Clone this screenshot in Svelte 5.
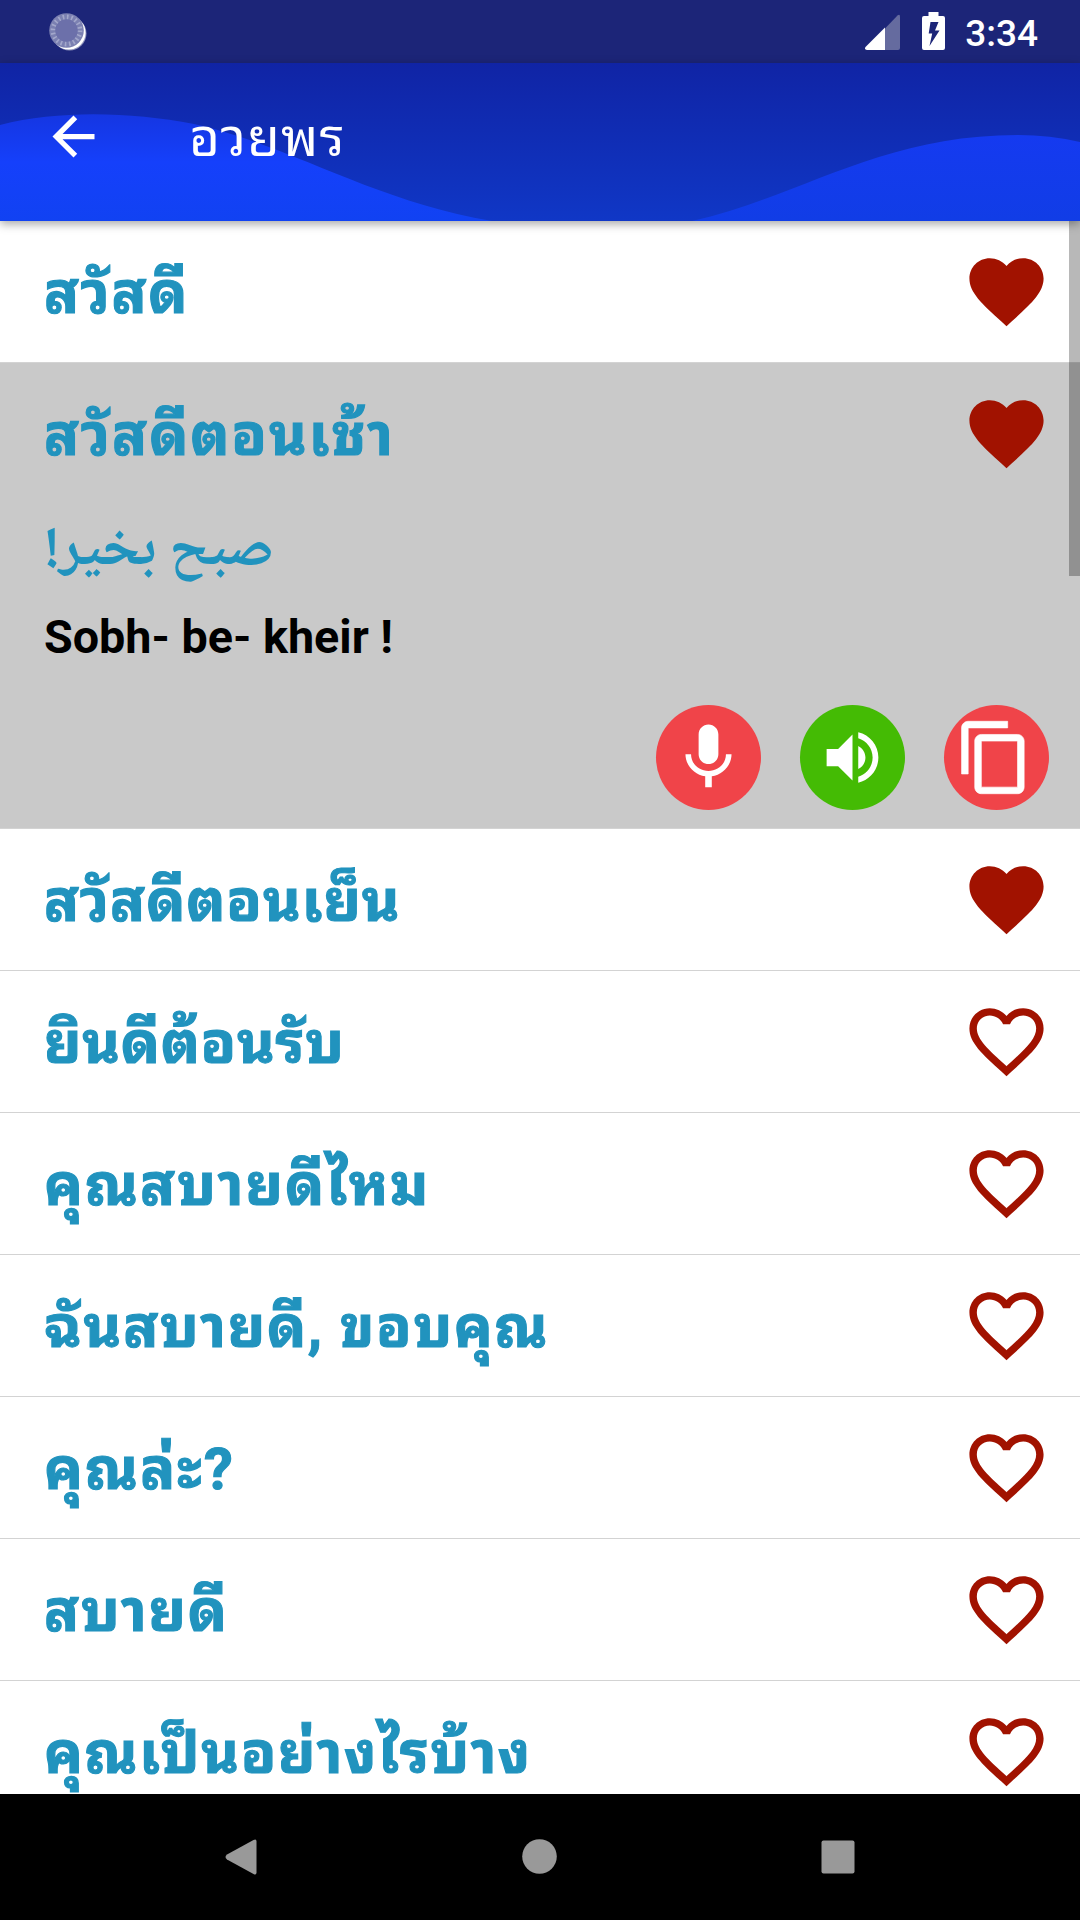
<script lang="ts">
	interface Phrase {
		text: string;
		tracking: number;
		favorite: boolean;
		translation?: string;
		spoken?: string;
	}

	let phrases: Phrase[] = $state([
		{ text: 'สวัสดี', tracking: 1.7, favorite: true },
		{
			text: 'สวัสดีตอนเช้า',
			tracking: 2,
			favorite: true,
			translation: 'صبح بخیر!',
			spoken: 'Sobh- be- kheir !'
		},
		{ text: 'สวัสดีตอนเย็น', tracking: 1, favorite: true },
		{ text: 'ยินดีต้อนรับ', tracking: 0.8, favorite: false },
		{ text: 'คุณสบายดีไหม', tracking: 2.1, favorite: false },
		{ text: 'ฉันสบายดี, ขอบคุณ', tracking: 1.8, favorite: false },
		{ text: 'คุณล่ะ?', tracking: 2.2, favorite: false },
		{ text: 'สบายดี', tracking: 1.8, favorite: false },
		{ text: 'คุณเป็นอย่างไรบ้าง', tracking: 1.7, favorite: false }
	]);

	let opened = $state(1);
</script>

<div class="screen">
	<div class="status-bar">
		<svg class="spinner" width="40" height="40" viewBox="0 0 40 40">
			<circle cx="21.5" cy="21.5" r="17" fill="#8d92bb" />
			<circle cx="20.8" cy="20.8" r="16.8" fill="#fff" />
			<circle cx="18.5" cy="18.5" r="17.3" fill="#7b80b1" />
			<circle cx="18.5" cy="18.5" r="13.4" fill="none" stroke="#a3a7cb" stroke-width="5" stroke-dasharray="1.6 2.61" />
			<circle cx="18.5" cy="18.5" r="11.2" fill="#6c70aa" />
		</svg>
		<div class="status-icons">
			<svg width="35" height="36" viewBox="0 0 35 36">
				<path d="M20 14.5 32.500 1.500Q35-.5 35 2.500V34q0 2-2 2H20z" fill="#656b9f" />
				<path d="M20 13.500V36H2q-3-.5-1.500-3z" fill="#fff" />
			</svg>
			<svg class="battery" width="23" height="38" viewBox="0 0 23 38">
				<path
					fill="#fff"
					fill-rule="evenodd"
					d="M6.500 0h10v4H21q2 0 2 2v30q0 2-2 2H2q-2 0-2-2V6q0-2 2-2h4.500zM8.500 10 6.700 21.500h3.500L7.500 34 17.500 18.500h-4.500L16.500 10z"
				/>
			</svg>
			<span class="time">3:34</span>
		</div>
	</div>

	<header>
		<svg class="waves" width="1080" height="158" viewBox="0 0 1080 158" preserveAspectRatio="none">
			<defs>
				<linearGradient id="left" x1="0" y1="0" x2="0" y2="1">
					<stop offset="0" stop-color="#1536e2" />
					<stop offset=".45" stop-color="#1540fb" />
					<stop offset="1" stop-color="#1142f2" />
				</linearGradient>
				<linearGradient id="right" x1="0" y1="0" x2="0" y2="1">
					<stop offset="0" stop-color="#153af0" />
					<stop offset="1" stop-color="#113de6" />
				</linearGradient>
			</defs>
			<path d="M0 62C60 47 130 49 194 61C290 82 370 137 492 158H0z" fill="url(#left)" />
			<path d="M692 158C800 134 880 72 1018 72Q1050 72 1080 79V158z" fill="url(#right)" />
		</svg>
		<div class="toolbar">
			<svg width="63" height="63" viewBox="0 0 24 24" fill="#fff">
				<path d="M20 11H7.830l5.590-5.590L12 4l-8 8 8 8 1.410-1.410L7.830 13H20v-2z" />
			</svg>
			<h1>อวยพร</h1>
		</div>
	</header>

	<main>
		{#each phrases as phrase, i}
			<section class:open={i === opened}>
				<div class="phrase">
					<button class="title" style:letter-spacing="{phrase.tracking}px" onclick={() => (opened = i)}>
						{phrase.text}
					</button>
					<button aria-label="favorite" onclick={() => (phrase.favorite = !phrase.favorite)}>
						<svg width="89" height="89" viewBox="0 0 24 24" fill="#a11200">
							{#if phrase.favorite}
								<path
									d="M12 21.350l-1.450-1.320C5.400 15.360 2 12.280 2 8.500 2 5.420 4.420 3 7.500 3c1.740 0 3.410.81 4.500 2.090C13.090 3.810 14.760 3 16.500 3 19.580 3 22 5.420 22 8.500c0 3.780-3.400 6.860-8.550 11.540L12 21.350z"
								/>
							{:else}
								<path
									d="M16.500 3c-1.740 0-3.410.81-4.500 2.090C10.910 3.810 9.240 3 7.500 3 4.420 3 2 5.420 2 8.500c0 3.780 3.400 6.860 8.550 11.540L12 21.350l1.450-1.320C18.600 15.360 22 12.280 22 8.500 22 5.420 19.580 3 16.500 3zm-4.400 15.550l-.1.1-.1-.1C7.140 14.240 4 11.390 4 8.500 4 6.500 5.500 5 7.500 5c1.540 0 3.040.99 3.570 2.360h1.870C13.460 5.990 14.960 5 16.500 5c2 0 3.500 1.500 3.500 3.500 0 2.890-3.140 5.740-7.900 10.050z"
								/>
							{/if}
						</svg>
					</button>
				</div>

				{#if i === opened && phrase.translation}
					<p class="translation" dir="rtl" lang="fa">{phrase.translation}</p>
					<p class="spoken">{phrase.spoken}</p>
					<div class="actions">
						<button class="round" aria-label="record">
							<svg width="79" height="79" viewBox="0 0 24 24" fill="#fff">
								<path
									d="M12 14c1.660 0 3-1.340 3-3V5c0-1.660-1.340-3-3-3S9 3.340 9 5v6c0 1.660 1.340 3 3 3zm5.300-3c0 3-2.540 5.100-5.300 5.100S6.700 14 6.700 11H5c0 3.410 2.720 6.230 6 6.720V21h2v-3.280c3.280-.48 6-3.300 6-6.720h-1.700z"
								/>
							</svg>
						</button>
						<button class="round green" aria-label="listen">
							<svg width="69" height="69" viewBox="0 0 24 24" fill="#fff">
								<path
									d="M3 9v6h4l5 5V4L7 9H3zm13.500 3c0-1.770-1.020-3.290-2.500-4.030v8.050c1.480-.73 2.500-2.250 2.500-4.020zM14 3.230v2.060c2.890.86 5 3.540 5 6.710s-2.110 5.850-5 6.710v2.060c4.010-.91 7-4.490 7-8.770s-2.990-7.860-7-8.770z"
								/>
							</svg>
						</button>
						<button class="round copy" aria-label="copy">
							<svg width="79" height="79" viewBox="0 0 24 24" fill="#fff" stroke="#fff" stroke-width=".2">
								<path
									d="M16 1H4c-1.100 0-2 .9-2 2v14h2V3h12V1zm3 4H8c-1.100 0-2 .9-2 2v14c0 1.100.9 2 2 2h11c1.100 0 2-.9 2-2V7c0-1.100-.9-2-2-2zm0 16H8V7h11v14z"
								/>
							</svg>
						</button>
					</div>
				{/if}
			</section>
		{/each}
		<div class="scrollbar"></div>
	</main>

	<nav>
		<svg width="1080" height="126" viewBox="0 0 1080 126" fill="#999">
			<path d="M227 60.500 253.500 46q3-1.500 3 1.500v31q0 3-3 1.500L227 65.500q-3-2.500 0-5z" />
			<circle cx="539.500" cy="62.500" r="17.300" />
			<rect x="821.500" y="46.500" width="33" height="33" rx="2" />
		</svg>
	</nav>
</div>

<style>
	:global(body) {
		margin: 0;
	}

	.screen {
		display: flex;
		flex-direction: column;
		width: 1080px;
		height: 1920px;
		overflow: hidden;
		background: #fff;
		font-family: Roboto, 'Noto Sans Thai Looped', 'Noto Sans', sans-serif;
	}

	.status-bar {
		display: flex;
		justify-content: space-between;
		flex: none;
		height: 63px;
		padding: 0 42px 0 48px;
		box-sizing: border-box;
		background: #1c2578;
	}

	.spinner {
		margin-top: 12px;
	}

	.status-icons {
		display: flex;
		align-items: flex-start;
	}

	.status-icons svg {
		margin-top: 14px;
	}

	.status-icons .battery {
		margin: 12px 20px 0 22px;
	}

	.time {
		margin-top: 12px;
		color: #fff;
		font-size: 37px;
		font-weight: 500;
		line-height: 44px;
	}

	header {
		position: relative;
		z-index: 1;
		flex: none;
		height: 158px;
		background: linear-gradient(#1024a5, #1037c6);
		box-shadow: 0 3px 9px rgba(0, 0, 0, 0.35);
	}

	.waves {
		position: absolute;
		inset: 0;
	}

	.toolbar {
		position: relative;
		display: flex;
		align-items: center;
		height: 147px;
		padding-left: 42px;
	}

	h1 {
		margin: 0 0 0 84px;
		padding-top: 3px;
		color: #fff;
		font-size: 53px;
		font-weight: 400;
		letter-spacing: 1.2px;
		line-height: 70px;
	}

	main {
		position: relative;
		flex: 1;
		min-height: 0;
		overflow: hidden;
	}

	section {
		border-bottom: 1px solid #d3d3d3;
	}

	.open {
		height: 465px;
		background: #c9c9c9;
	}

	button {
		display: block;
		padding: 0;
		border: 0;
		background: none;
		font: inherit;
	}

	button svg {
		display: block;
	}

	.phrase {
		display: flex;
		justify-content: space-between;
		align-items: center;
		height: 141px;
		padding: 0 29px 0 44px;
	}

	.title {
		padding-top: 3px;
		color: #2193be;
		font-size: 57.75px;
		font-weight: 700;
		line-height: 70px;
		white-space: nowrap;
		-webkit-text-stroke: 1.2px #2193be;
	}

	p {
		margin: 0;
		padding-left: 44px;
	}

	.translation {
		height: 94px;
		color: #2193be;
		font-family: 'Noto Naskh Arabic', 'Noto Sans Arabic', 'DejaVu Sans', serif;
		font-size: 57.75px;
		font-weight: 700;
		line-height: 98px;
		text-align: left;
	}

	.spoken {
		color: #000;
		font-size: 46.7px;
		font-weight: 700;
		line-height: 78px;
	}

	.actions {
		display: flex;
		justify-content: flex-end;
		gap: 39px;
		padding: 29px 31px 0 0;
	}

	.round {
		display: flex;
		align-items: center;
		justify-content: center;
		width: 105px;
		height: 105px;
		border-radius: 50%;
		background: #f04449;
	}

	.green {
		background: #44bb04;
	}

	.copy svg {
		margin-right: 5px;
	}

	.scrollbar {
		position: absolute;
		top: 0;
		right: 0;
		width: 11px;
		height: 355px;
		background: rgba(0, 0, 0, 0.28);
	}

	nav {
		flex: none;
		height: 126px;
		background: #000;
	}
</style>
